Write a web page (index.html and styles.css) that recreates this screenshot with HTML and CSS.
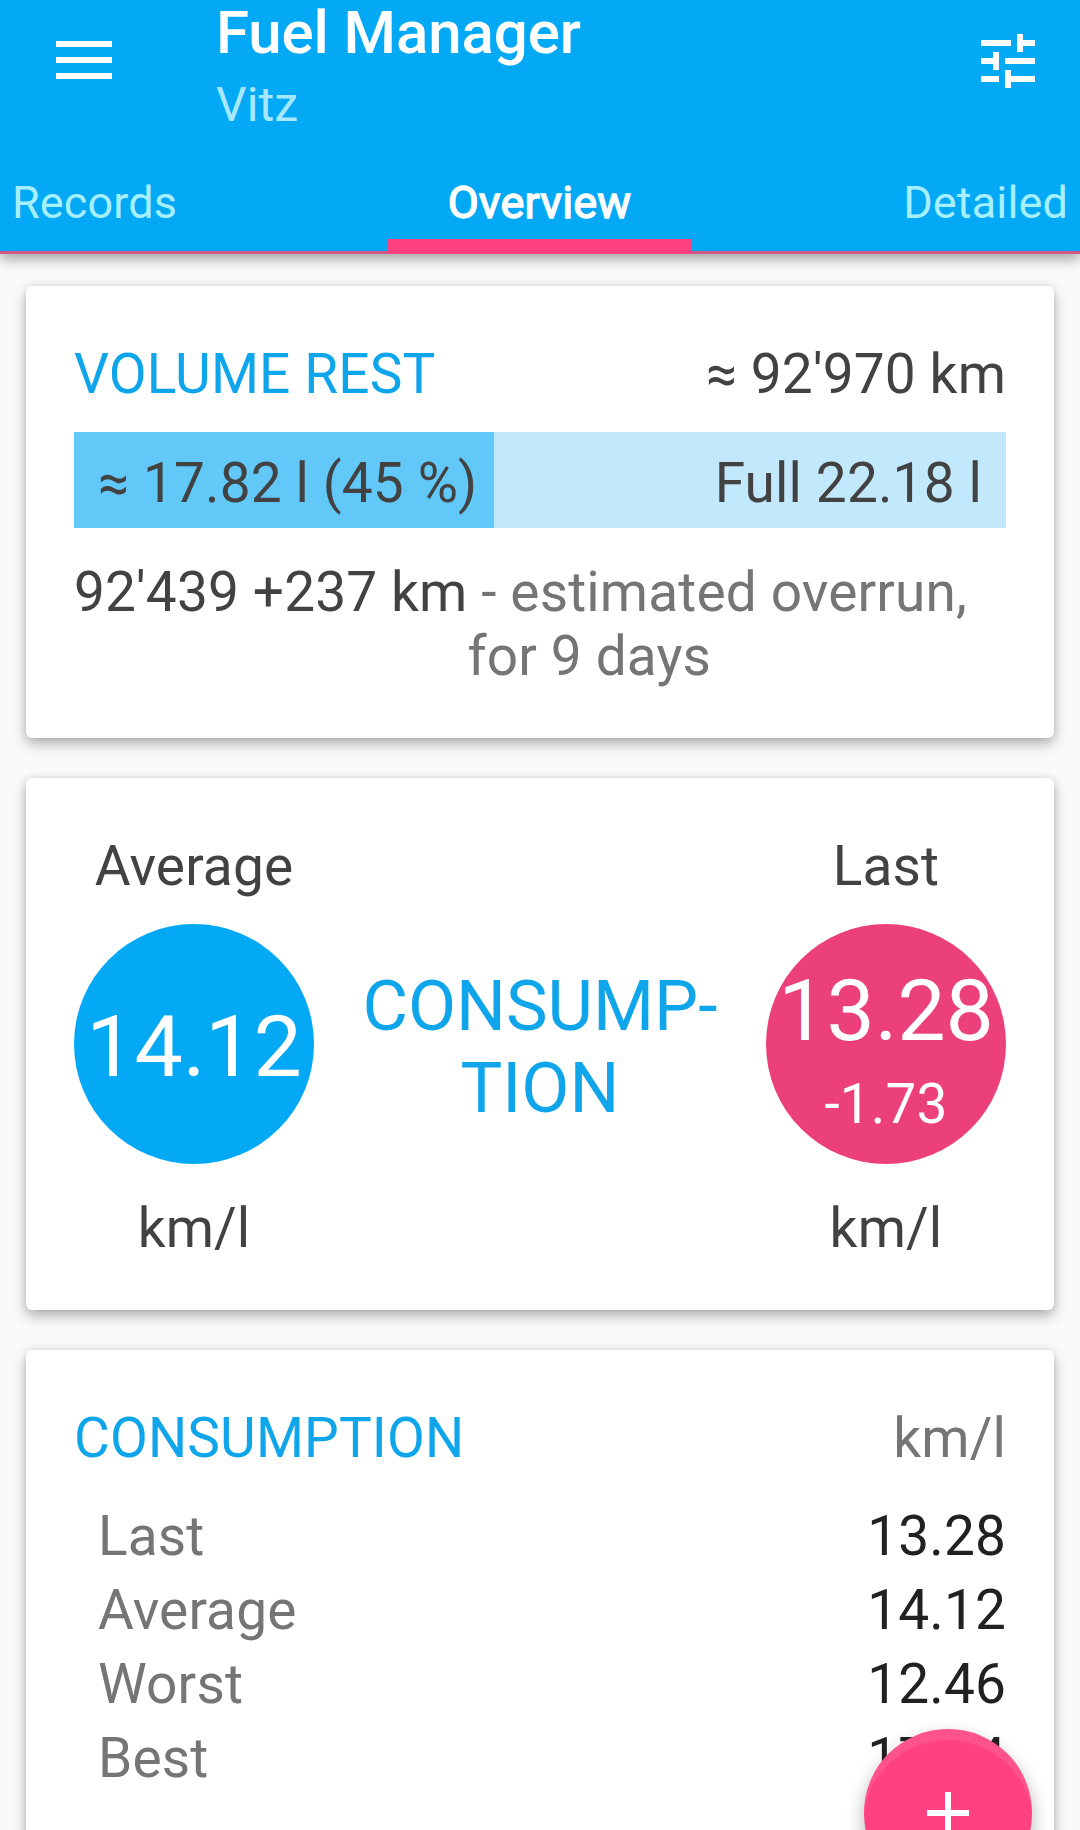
FILE: index.html
```html
<!DOCTYPE html>
<html lang="en">
<head>
<meta charset="utf-8">
<title>Fuel Manager</title>
<link rel="stylesheet" href="styles.css">
</head>
<body>
<div class="screen">
  <header class="app-bar">
    <div class="toolbar">
      <svg class="icon-menu" viewBox="0 0 56 38"><path d="M0 0h56v6H0zM0 16h56v6H0zM0 32h56v6H0z"/></svg>
      <div class="titles">
        <h1 class="title">Fuel Manager</h1>
        <div class="subtitle">Vitz</div>
      </div>
      <svg class="icon-tune" viewBox="3 3 18 18"><path d="M3 17v2h6v-2H3zM3 5v2h10V5H3zm10 16v-2h8v-2h-8v-2h-2v6h2zM7 9v2H3v2h4v2h2V9H7zm14 4v-2H11v2h10zm-6-4h2V7h4V5h-4V3h-2v6z"/></svg>
    </div>
    <nav class="tabs">
      <span class="tab tab-records">Records</span>
      <span class="tab active">Overview</span>
      <span class="tab tab-detailed">Detailed</span>
    </nav>
  </header>
  <main class="content">
    <section class="card">
      <div class="row">
        <h2 class="heading">VOLUME REST</h2>
        <span class="rest">≈ 92'970 km</span>
      </div>
      <div class="gauge">
        <div class="gauge-fill" style="width:45.06%"><span class="gauge-now">≈ 17.82 l (45 %)</span></div>
        <span class="gauge-full">Full 22.18 l</span>
      </div>
      <div class="estimate">
        <span class="odometer">92'439 +237 km</span>
        <div class="overrun">&nbsp;- estimated overrun,<br>for 9 days</div>
      </div>
    </section>
    <section class="card summary">
      <div class="metric">
        <span class="metric-label">Average</span>
        <div class="disc average"><span class="disc-value">14.12</span></div>
        <span class="metric-unit">km/l</span>
      </div>
      <h2 class="big-heading">CONSUMP-<br>TION</h2>
      <div class="metric">
        <span class="metric-label">Last</span>
        <div class="disc last"><span class="disc-value">13.28</span><span class="disc-delta">-1.73</span></div>
        <span class="metric-unit">km/l</span>
      </div>
    </section>
    <section class="card stats">
      <div class="row">
        <h2 class="heading">CONSUMPTION</h2>
        <span class="unit">km/l</span>
      </div>
      <dl class="stat-list">
        <div class="stat"><dt>Last</dt><dd>13.28</dd></div>
        <div class="stat"><dt>Average</dt><dd>14.12</dd></div>
        <div class="stat"><dt>Worst</dt><dd>12.46</dd></div>
        <div class="stat"><dt>Best</dt><dd>17.24</dd></div>
      </dl>
    </section>
  </main>
  <button class="fab" aria-label="Add"><svg class="icon-plus" viewBox="0 0 42 42"><path d="M18 0h6v18h18v6H24v18h-6V24H0v-6h18z"/></svg></button>
</div>
</body>
</html>
```
FILE: styles.css
```css
* { box-sizing: border-box; margin: 0; padding: 0; }
body { background: #fafafa; }
.screen {
  position: relative;
  width: 1080px;
  height: 1830px;
  overflow: hidden;
  background: #fafafa;
  font: 400 55px/64px Roboto, sans-serif;
  letter-spacing: .14px;
  color: #424242;
  white-space: nowrap;
}
h1, h2 { font-weight: 400; font-size: inherit; line-height: inherit; }

.app-bar {
  position: relative;
  z-index: 1;
  height: 254px;
  background: #04a9f5;
  color: #fff;
  box-shadow: 0 5px 13px rgba(0, 0, 0, .36);
}
.toolbar { display: flex; align-items: flex-start; height: 152px; padding: 0 45px 0 56px; }
.icon-menu { width: 56px; height: 38px; margin-top: 41px; fill: #fff; }
.titles { flex: 1; padding-left: 104px; }
.title { font-size: 60px; line-height: 66px; font-weight: 500; letter-spacing: -.1px; }
.subtitle { margin-top: 11px; font-size: 48px; line-height: 56px; color: #a5e8ff; }
.icon-tune { width: 54px; height: 54px; margin-top: 34px; fill: #fff; }
.tabs {
  display: grid;
  grid-template-columns: 388px 303px 389px;
  height: 102px;
  font-size: 45px;
  line-height: 102px;
  box-shadow: inset 0 -3px #d25987;
}
.tab { color: #a5efff; }
.tab-records { padding-left: 12px; }
.tab-detailed { padding-right: 12px; text-align: right; }
.active {
  color: #fff;
  text-align: center;
  -webkit-text-stroke: 1.4px #fff;
  box-shadow: inset 0 -15px #ff4081;
}

.content { display: flex; flex-direction: column; gap: 40px; padding: 32px 26px 0; }
.card {
  padding: 56px 48px 50px;
  border-radius: 6px;
  background: #fff;
  box-shadow: 0 6px 14px rgba(0, 0, 0, .29), 0 0 6px rgba(0, 0, 0, .1);
}
.row { display: flex; justify-content: space-between; }
.heading, .big-heading { color: #0fa5ea; }
.gauge {
  display: flex;
  justify-content: space-between;
  height: 96px;
  margin-top: 26px;
  background: #c1e8fb;
  line-height: 102px;
}
.gauge-fill { padding-left: 24px; background: #62c8f8; }
.gauge-full { padding-right: 24px; }
.estimate { display: flex; margin-top: 32px; }
.overrun { color: #757575; }

.summary { display: flex; justify-content: space-between; align-items: center; }
.metric { display: flex; flex-direction: column; align-items: center; width: 240px; }
.disc {
  display: flex;
  flex-direction: column;
  align-items: center;
  width: 240px;
  height: 240px;
  margin: 26px 0 32px;
  border-radius: 50%;
  color: #fff;
}
.average { padding-top: 73px; background: #04a9f5; }
.last { padding-top: 37px; background: #ec407a; }
.disc-value { font-size: 86px; line-height: 100px; letter-spacing: -.1px; }
.disc-delta { margin-top: 11px; }
.big-heading { font-size: 70px; line-height: 82px; text-align: center; letter-spacing: 0; }

.stats { height: 560px; }
.unit { color: #757575; }
.stat-list { margin-top: 29px; padding-left: 24px; line-height: 74px; }
.stat { display: flex; justify-content: space-between; }
.stat dt { color: #757575; }
.stat dd { color: #212121; }

.fab {
  position: absolute;
  left: 864px;
  top: 1729px;
  z-index: 2;
  display: grid;
  place-items: center;
  width: 168px;
  height: 168px;
  border: 0;
  border-radius: 50%;
  background: #ff4081;
  box-shadow: 0 8px 18px rgba(0, 0, 0, .3), inset 0 12px 1px -1px rgba(255, 255, 255, .1);
}
.icon-plus { width: 42px; height: 42px; fill: #fff; }
```
